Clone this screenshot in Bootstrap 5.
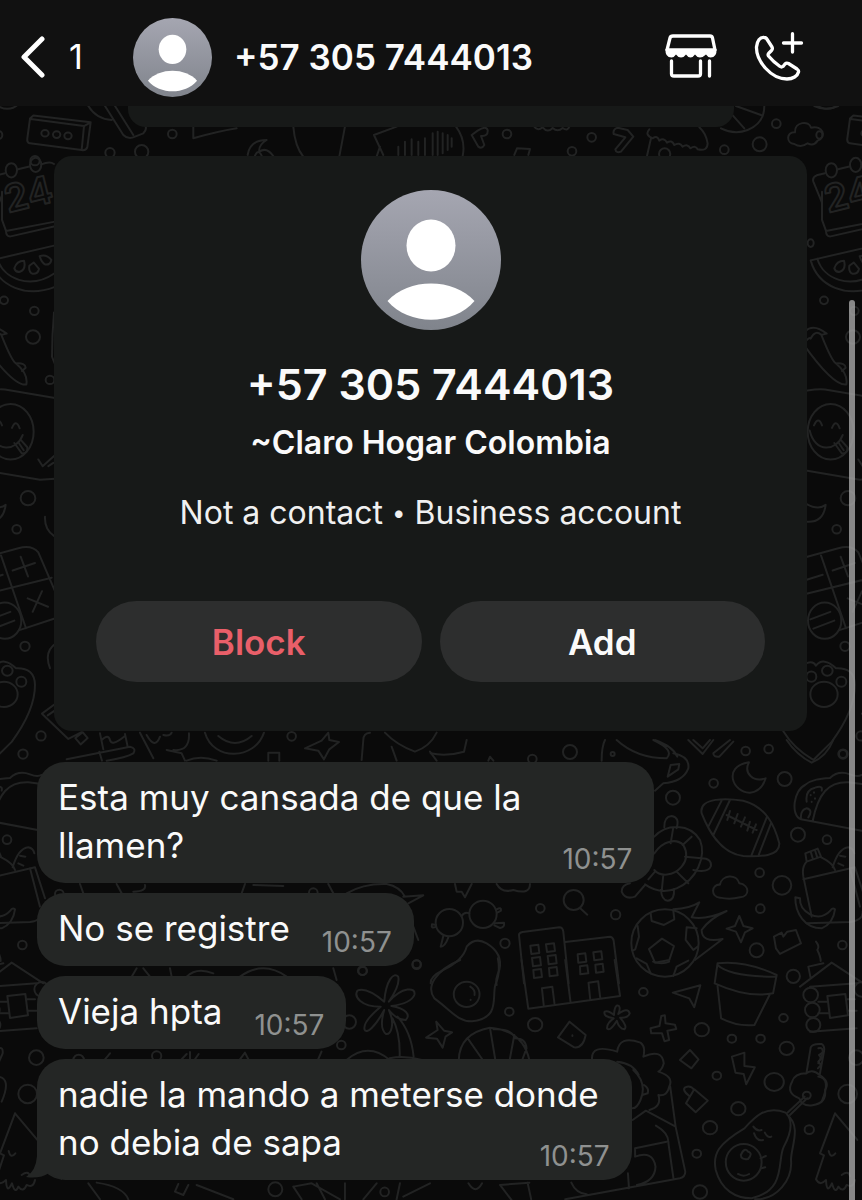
<!DOCTYPE html>
<html lang="es">
<head>
<meta charset="utf-8">
<meta name="viewport" content="width=device-width, initial-scale=1">
<title>+57 305 7444013</title>
<link href="https://cdn.jsdelivr.net/npm/bootstrap@5.3.0/dist/css/bootstrap.min.css" rel="stylesheet">
<style>
  body { background: #0a0a0a; color: #fafafa; font-family: Inter, "Liberation Sans", sans-serif; }
  .chat-page { min-height: 100vh; }
  .wallpaper { inset: 0; z-index: 0; }
  .wallpaper g { fill: none; stroke: #222323; stroke-width: 2; stroke-linecap: round; stroke-linejoin: round; }
  .wallpaper path, .wallpaper circle, .wallpaper ellipse, .wallpaper rect { vector-effect: non-scaling-stroke; }
  .chat-header { background: #111111; height: 106px; padding: 8px 58px 0 20px; z-index: 2; }
  .back-link { gap: 24px; font-size: 34px; line-height: 48px; width: 113px; }
  .header-title { font-size: 35px; font-weight: 600; line-height: 48px; margin-left: 22px; }
  .header-actions { gap: 37px; }
  .icon-btn { line-height: 0; color: #fff; }
  .chat-main { z-index: 1; padding-bottom: 20px; }
  .notice-end { height: 21px; margin: 0 128px; background: #171918; border-radius: 0 0 18px 18px; }
  .contact-card { background: #171918; border-radius: 18px; margin: 29px 55px 31px 54px; padding: 34px 42px 49px; }
  .card-phone { font-size: 43px; font-weight: 600; line-height: 56px; margin-top: 26px; }
  .card-name { font-size: 32px; font-weight: 600; line-height: 40px; margin-top: 11px; }
  .card-note { font-size: 32px; line-height: 40px; margin: 30px 0 68px; color: #f0f0f0; }
  .card-note .dot { font-size: 24px; line-height: 24px; vertical-align: 3px; }
  .pill-btn { background: #2d2e2e; color: #fafafa; border: 0; border-radius: 41px; height: 81px; font-size: 35px; font-weight: 600; line-height: 48px; }
  .pill-btn.is-danger { color: #e95f69; }
  .action-row { gap: 18px; }
  .message-list { gap: 10px; margin-left: 37px; }
  .bubble { background: #242625; border-radius: 28px; padding: 11px 33px 14px 21px; font-size: 35px; line-height: 48px; }
  .bubble.beside-time { padding-right: 124px; }
  .bubble.wide-bubble { padding-right: 133px; }
  .bubble time { right: 22px; bottom: 8px; font-size: 28px; line-height: 32px; color: #8f9190; }
  .bubble-tail { left: -11px; bottom: 0; }
  .scroll-thumb { top: 300px; bottom: 0; right: 7px; width: 6px; border-radius: 3px 3px 0 0; background: rgba(170,170,170,.78); z-index: 3; }
</style>
</head>
<body>
<div class="chat-page position-relative overflow-hidden">

  <svg class="wallpaper position-absolute w-100 h-100" viewBox="0 0 862 1200" preserveAspectRatio="xMinYMin slice" aria-hidden="true">
    <defs>
      <!-- edge column of doodles, shared by both sides of the tile -->
      <g id="edge-top" transform="translate(0 100) scale(.3333 .4209)">
        <path d="M-15 10Q25 32 55 10"/><circle cx="-2" cy="83" r="9"/>
        <path d="M90 44L100 37L272 53L262 112Q258 121 245 119L90 103Q80 101 82 91ZM92 45L252 62L245 119M252 62L272 53"/>
        <ellipse cx="135" cy="79" rx="11" ry="8"/><ellipse cx="170" cy="82" rx="11" ry="8"/><ellipse cx="204" cy="85" rx="11" ry="8"/>
        <path d="M15 174L-10 179Q-24 184 -20 194L6 244M51 165L88 158M124 153Q150 145 162 152M6 244V285L18 311L165 289M18 311Q18 325 32 324L165 300M6 218V285"/>
        <ellipse cx="34" cy="167" rx="17" ry="17"/><ellipse cx="107" cy="154" rx="17" ry="17"/>
        <path d="M-28 381L162 346M-28 381C-5 445 80 470 165 444M-8 377C10 425 90 452 165 411"/>
        <path d="M43 400Q50 382 72 382Q79 402 60 408Q47 410 43 400ZM88 394L101 386L117 401Q114 414 98 413Q85 409 88 394ZM119 371Q140 366 154 380Q151 392 136 391Q125 387 119 371Z"/>
        <circle cx="-28" cy="340" r="9"/><ellipse cx="12" cy="476" rx="12" ry="9"/><ellipse cx="103" cy="501" rx="13" ry="10"/><ellipse cx="99" cy="563" rx="21" ry="16"/><ellipse cx="150" cy="665" rx="13" ry="10"/>
        <path d="M-45 550Q-20 530 20 555L4 558Q35 620 48 626Q85 650 79 676Q40 680 -50 580Q-30 560 -28 567Q-15 545 4 558M48 626Q76 624 77 636L66 644M162 505Q156 560 156 610L164 626"/>
        <path d="M-90 700Q-20 685 15 688L165 708M-60 878L120 902L165 900"/>
        <ellipse cx="32" cy="788" rx="69" ry="66"/><path d="M-31 785C-15 840 50 835 68 796M-18 773Q-5 750 6 773M36 779Q48 757 59 780M43 815L66 840Q84 840 82 825L63 808M55 813L71 832M115 854L128 870L162 846M145 870L160 862"/>
        <ellipse cx="84" cy="946" rx="22" ry="17"/><ellipse cx="50" cy="1020" rx="13" ry="10"/><path d="M-40 960Q-5 975 17 962Q10 1005 -40 1002M135 990Q133 1020 162 1036"/>
        <path d="M-60 1090L55 1065Q95 1056 115 1075L164 1165M-50 1175L155 1135M3 1082L78 1255M56 1260L164 1232M38 1118L105 1100M62 1085L84 1132M83 1184L144 1204M98 1216L126 1167M-40 1140L8 1128"/>
        <ellipse cx="14" cy="1237" rx="50" ry="43"/><path d="M-29 1234L31 1216M-20 1256L43 1237"/>
        <ellipse cx="75" cy="1298" rx="14" ry="11"/><ellipse cx="22" cy="1356" rx="16" ry="12"/><ellipse cx="64" cy="1382" rx="15" ry="12"/><ellipse cx="12" cy="1412" rx="41" ry="30"/><ellipse cx="-26" cy="1370" rx="15" ry="12"/>
        <path d="M-40 1338Q-20 1332 -12 1344Q10 1322 48 1350Q104 1348 105 1390Q105 1450 35 1525L-20 1568Q-80 1540 -110 1500M170 1290Q130 1310 150 1350"/>
        <ellipse cx="123" cy="1511" rx="14" ry="11"/><ellipse cx="69" cy="1554" rx="14" ry="11"/><path d="M165 1435L126 1458L205 1518L245 1502M165 1450L143 1462M226 1516L248 1502L263 1516L242 1531Z"/>
      </g>
      <g id="edge-bottom" transform="translate(0 720) scale(.3333)">
        <path d="M-57 298C-90 285 -78 210 -45 195C-25 178 0 176 30 174Q55 150 90 163Q112 172 125 165M-57 298L125 332M-22 303C-5 220 25 185 85 187L125 192M-40 245Q-45 210 -15 203Q10 195 5 212M-57 298Q-60 270 -40 265Q-20 270 -35 292M-28 225v1M-18 217v1M-15 235v1M-25 245v1"/>
        <circle cx="21" cy="359" r="13"/>
        <path d="M-44 400L-7 386L3 410L-40 425ZM-28 395L-22 415M-15 391L-9 410M-40 425Q-55 440 -50 470L-25 590M4 412Q40 430 45 450M38 442Q55 385 85 382Q100 385 103 400M55 430L70 437M60 407L76 410M-50 478L105 442L135 535M90 445L120 560M-40 610L90 606Q130 600 128 575"/>
        <path d="M-74 532C-75 580 -45 625 5 625Q40 610 45 568Q37 562 31 572Q5 600 -30 583Q-62 565 -60 535Z"/>
        <circle cx="67" cy="675" r="13"/><path d="M-12 665Q0 680 -8 690Q2 710 2 723"/>
        <path d="M-60 800L35 728L130 790M-35 740L10 730M-35 740L-28 775M-30 800L110 790M-30 935L110 925M22 828L76 822L84 886L30 894ZM-5 845H22M-5 880H28M79 838H105M84 872H110"/>
        <circle cx="-28" cy="825" r="22"/><circle cx="-23" cy="870" r="22"/><circle cx="-20" cy="915" r="21"/><circle cx="125" cy="808" r="22"/>
        <circle cx="109" cy="1013" r="22"/><circle cx="83" cy="1122" r="28"/>
        <path d="M-5 985Q10 980 8 1000L-5 1030M-5 1070Q35 1075 5 1145M45 1180L112 1260M45 1180L0 1300L12 1306L-12 1378Q0 1400 18 1380Q20 1425 36 1390Q45 1425 55 1400Q70 1420 80 1395Q100 1405 105 1380M26 1293Q32 1318 46 1300M65 1365Q85 1350 90 1368"/>
      </g>
    </defs>
    <use href="#edge-top"/><use href="#edge-top" x="820"/>
    <use href="#edge-bottom"/><use href="#edge-bottom" x="820"/>
    <g font-size="38" font-weight="600" font-family="Inter, sans-serif">
      <text transform="translate(8 213) rotate(-14)">24</text>
      <text transform="translate(828 213) rotate(-14)">24</text>
    </g>

    <!-- strip above the contact card -->
    <g transform="scale(.3333)">
      <path d="M265 318Q290 358 335 360M315 318L370 405Q385 420 405 410L430 400Q445 385 432 370M345 318L400 405M580 380V415Q650 395 710 385M880 380Q885 440 910 470M1035 380L1018 470M743 465Q750 420 800 420Q775 435 778 455Q800 440 820 468M765 467Q775 445 785 467M1190 380L1122 405L1150 465M1140 440L1130 470M1195 465V440M1215 465V425M1235 465V418M1255 465V425M1275 465V415"/>
      <circle cx="517" cy="402" r="13"/><circle cx="330" cy="458" r="14"/><circle cx="425" cy="455" r="20"/><circle cx="105" cy="482" r="14"/>
    </g>
    <g transform="translate(431 0) scale(.3333)">
      <path d="M5 465V400M20 465V395M35 460V400M50 450V405M62 440V415M75 380Q105 420 95 468M122 405L140 392Q165 375 170 390Q172 410 150 408L160 435Q152 448 142 440ZM310 380Q320 395 335 382Q350 400 365 384Q380 398 395 384Q410 395 415 380M250 465L258 445L297 447L292 465M548 402Q545 388 560 383L590 390L607 410L570 455Q555 460 553 448L583 412ZM655 388Q640 405 665 415Q680 405 685 422Q700 412 708 428Q722 418 730 435Q745 425 755 440Q770 430 778 445Q795 435 800 448Q830 455 830 430Q825 400 805 382M660 415L648 468M870 385Q910 405 950 390Q1000 370 1000 318M900 340L940 385M915 318L990 345M1150 318Q1185 335 1222 318"/>
      <circle cx="228" cy="402" r="13"/><circle cx="423" cy="454" r="13"/><circle cx="482" cy="412" r="13"/><circle cx="701" cy="462" r="17"/><circle cx="880" cy="449" r="13"/><circle cx="986" cy="433" r="21"/><circle cx="1036" cy="371" r="13"/>
      <path d="M1090 432C1065 430 1065 395 1092 397C1090 365 1135 360 1140 383C1175 375 1190 410 1160 422Q1148 440 1130 430Q1110 445 1090 432Z"/>
    </g>

    <!-- left half, around the messages -->
    <g transform="translate(0 720) scale(.3333)">
      <path d="M200 118L390 80Q410 85 400 100Q380 112 320 122M298 95L306 122M300 40L310 88M375 42L383 80M305 60Q325 40 330 60T372 50M420 38L460 115M440 45Q465 90 480 50M490 45Q510 50 515 38M520 90Q570 95 567 40M500 90L545 100L555 122M615 38C640 125 765 120 792 38M655 48Q705 90 755 48M985 38L965 62L915 85L955 92L972 118L988 88L1017 66L988 60ZM1085 120L1090 60Q1090 40 1110 38M1155 38Q1190 75 1245 95Q1290 80 1310 38M1175 80L1190 122M1290 95L1310 122M805 122V98H838V122M560 122Q600 105 650 122"/>
      <circle cx="875" cy="49" r="13"/>
      <path d="M240 492L250 520M350 492L365 520M400 515Q440 515 435 495M725 520L735 492M760 495L850 498M985 492L1000 520M1040 520Q1090 490 1160 492Q1200 500 1215 530M1210 530L1270 526L1225 550M1240 620L1255 660M410 745L395 770M430 745L450 770M510 745L515 770M560 770Q590 740 640 760M720 770Q790 720 860 770M1000 745L1010 780"/>
      <circle cx="178" cy="522" r="13"/><circle cx="940" cy="518" r="13"/><circle cx="1087" cy="752" r="13"/><circle cx="1250" cy="733" r="12"/><circle cx="1048" cy="906" r="20"/><circle cx="1024" cy="975" r="13"/><circle cx="236" cy="1020" r="16"/><circle cx="470" cy="1008" r="14"/><circle cx="826" cy="1408" r="21"/><circle cx="1154" cy="1416" r="13"/>
      <path d="M545 1018L560 1002M570 1018V996M585 1018L596 1002M720 1018L735 998L745 1018M330 1000L315 1018M265 1390L300 1438M290 1388Q370 1400 385 1438M535 1392L525 1415L550 1425L565 1395M590 1395L700 1438M880 1400L905 1438M880 1400L935 1390L1020 1438M950 1390L975 1438M1035 1390V1438M1090 1438L1130 1390M1190 1438L1200 1390M1210 1430L1290 1390"/>
    </g>

    <!-- right of the first message -->
    <g transform="translate(400 740) scale(.3333)">
      <path d="M92 40Q140 50 192 35L200 0M605 62Q605 20 615 0M650 0Q710 55 800 55Q825 30 760 0M820 40Q870 50 865 85Q850 125 790 130L765 152M765 0Q820 20 832 50M812 75L838 72L835 88L803 110ZM865 0L908 42L940 0M880 0L908 25L930 0M990 0L940 40Q940 52 958 50L1000 5M1160 0Q1190 45 1235 68Q1280 50 1300 0M265 62L270 50L280 62"/>
      <circle cx="510" cy="36" r="21"/><circle cx="638" cy="42" r="6"/><circle cx="397" cy="57" r="13"/><circle cx="1037" cy="33" r="13"/><circle cx="1106" cy="27" r="13"/><circle cx="1329" cy="42" r="12"/><circle cx="941" cy="130" r="13"/><circle cx="1154" cy="117" r="21"/><circle cx="819" cy="173" r="21"/>
      <path d="M1047 67C965 80 1000 160 1050 158Q1085 155 1097 115C1060 128 1030 100 1047 67Z"/>
      <path d="M905 220C895 170 985 175 1030 182C1100 200 1125 260 1138 310C1140 350 1080 350 1030 348C960 340 925 270 905 220ZM965 182L925 260M990 180L940 285M1100 233L1055 345M1113 250L1075 348M980 225L1070 270M990 213L982 240M1013 222L1003 250M1035 232L1023 260M1050 245L1042 272M1068 253L1058 278"/>
      <path d="M763 290C800 250 870 250 900 300C920 350 890 420 830 445Q780 465 735 433M763 340C790 300 830 295 850 315Q870 350 845 380C820 410 780 410 763 390M820 262L812 310M875 290L848 315M905 355L855 350M865 430L830 395M785 455L790 405M745 418L765 395M793 262Q792 230 815 228Q840 232 830 265M905 355Q935 355 933 378Q925 400 880 390M783 450Q785 480 803 482Q825 480 822 447M735 435L705 470Q675 480 665 455Q665 435 690 430"/>
      <circle cx="1194" cy="284" r="21"/><circle cx="1079" cy="398" r="13"/><circle cx="1146" cy="436" r="28"/><circle cx="1081" cy="506" r="13"/><circle cx="421" cy="505" r="13"/><circle cx="647" cy="524" r="14"/><circle cx="315" cy="610" r="14"/><circle cx="50" cy="674" r="13"/><circle cx="1070" cy="631" r="21"/><circle cx="1180" cy="709" r="20"/>
      <path d="M960 473C930 470 935 432 960 434C965 405 1010 400 1018 430C1050 435 1050 470 1020 472Q990 480 960 473ZM290 432Q305 460 340 450Q390 465 390 432M165 432L170 455H185L195 472L215 432"/>
      <circle cx="521" cy="480" r="30"/><path d="M540 504L562 524"/>
      <circle cx="148" cy="548" r="41"/><circle cx="249" cy="523" r="41"/><path d="M185 528Q193 515 208 520M108 560Q92 568 96 553L108 555M290 508Q305 500 303 512L292 518M283 550L312 548Q315 562 300 564L283 556M130 588L122 620Q135 620 145 592"/>
      <path d="M92 730Q90 710 130 690Q190 660 200 620Q225 590 260 610Q310 640 298 690Q285 720 290 735"/>
      <path d="M372 730L357 585Q357 578 368 576L478 562Q488 562 490 575L506 730M496 606L630 590Q640 592 641 602L657 730M391 617L415 614 418 639 394 642ZM438 613L462 610 465 633 441 636ZM396 654L420 651 423 676 399 679ZM443 648L467 645 470 670 446 673ZM400 690L423 687 426 711 402 714ZM447 684L470 681 473 706 449 709ZM533 643L556 640 559 665 535 668ZM580 637L604 634 607 658 583 661ZM540 679L562 676 565 700 541 703ZM586 674L608 671 611 695 588 698Z"/>
      <circle cx="795" cy="609" r="101"/><path d="M786 596L822 618L808 660L765 668L747 627ZM752 520L755 543L792 555L823 538L820 512M713 558L717 590L706 628L698 632M890 565L860 562L857 600L880 630L893 620M710 655L740 672L752 700M820 708L830 680L865 662M820 508Q870 505 898 487L875 532Q920 540 980 513Q930 535 905 570Q905 610 968 597L885 660"/>
      <path d="M1018 528L1005 558L980 566L1008 575L1023 607L1035 577L1058 565L1030 558ZM1122 590L1145 578L1150 590L1162 575L1188 570L1203 610L1140 642L1128 625Z"/>
    </g>

    <!-- around the last messages -->
    <g transform="translate(300 960) scale(.3584 .3333)">
      <circle cx="175" cy="33" r="12"/><circle cx="584" cy="155" r="12"/><circle cx="656" cy="194" r="20"/><circle cx="958" cy="96" r="12"/><circle cx="1121" cy="209" r="20"/><circle cx="1205" cy="236" r="12"/><circle cx="1285" cy="236" r="12"/><circle cx="1358" cy="265" r="20"/><circle cx="1349" cy="174" r="12"/><circle cx="1163" cy="347" r="12"/><circle cx="1323" cy="366" r="27"/><circle cx="1223" cy="446" r="20"/><circle cx="1144" cy="503" r="20"/><circle cx="1107" cy="581" r="12"/><circle cx="1116" cy="696" r="20"/><circle cx="1421" cy="509" r="13"/>
      <path d="M235 125C240 60 262 35 274 50Q280 75 248 125C285 80 325 80 319 105Q310 130 255 138C295 145 310 165 295 180Q270 180 248 150C265 190 255 225 240 222Q220 205 235 150C210 200 185 225 180 208Q175 185 225 140C170 140 150 110 160 92Q185 80 235 125ZM258 175Q280 220 278 290M272 170Q310 215 317 290M130 300Q190 245 250 300M250 295Q290 285 340 300M50 300L60 275"/>
      <path d="M447 0C380 30 350 80 375 115C420 150 440 185 480 184C560 175 535 110 545 75Q560 40 552 -5"/><ellipse cx="465" cy="103" rx="36" ry="38"/><path d="M475 80Q490 90 487 105M476 119v1"/>
      <path d="M618 0L637 146L893 108L878 0M740 0L755 128M680 135L675 85L704 80L710 130M810 120L805 68L832 64L838 116M985 5Q1010 15 1030 5"/>
      <path d="M380 185L384 210L352 233L382 236L398 263L406 230L424 217L402 212ZM443 300Q445 220 530 203Q620 210 640 300M468 235L510 300M530 203L545 300M598 225L585 300M632 265L620 300M540 208Q590 205 600 235Q630 235 632 265"/>
      <path d="M752 185L720 232L765 262Q790 265 797 225ZM760 226v2M876 165Q878 130 890 138Q895 145 888 162Q915 140 920 160Q915 175 893 173Q915 200 905 208Q890 205 884 182Q865 215 857 206Q855 190 875 175Q845 170 850 155Q860 150 876 165ZM1008 168L1018 166 1020 190 1046 194 1050 207 1025 212 1030 240 1017 244 1010 220 980 220 978 205 1003 198ZM1040 98L1117 76L1100 142L1086 115Z"/>
      <path d="M1165 10Q1240 0 1330 45L1320 100Q1250 115 1157 70ZM1165 15Q1200 50 1325 50M1165 78L1175 175Q1220 200 1268 195L1310 105"/>
      <path d="M1088 270L1112 298L1092 325L1060 300ZM1205 290L1240 278V318L1269 322L1245 373L1238 342L1215 338ZM1100 388L1138 422L1104 457L1077 430ZM1085 407Q1065 390 1075 382Q1090 375 1100 390"/>
      <path d="M815 300Q810 250 885 275Q890 225 950 248Q965 260 958 290Q1010 265 1015 310Q1010 330 1000 335Q1045 350 1030 380Q1025 410 1000 405Q1010 440 975 450M930 330Q970 370 950 420Q940 445 928 445M885 305Q930 310 945 345M960 375Q975 385 970 400L955 405M928 480L965 452L1048 500L1075 635Q1075 650 1060 655L740 718M1033 380L1048 500M993 497Q1030 520 1028 550L1042 655M935 565L1023 545M935 565V590Q985 570 992 620Q990 665 940 675M915 640L918 685M757 668Q770 700 800 703M558 675L640 668M558 675L590 720M635 668L645 718M470 670Q490 705 508 670"/>
      <path d="M1425 262Q1430 250 1455 252Q1465 258 1462 275L1450 345M1425 262L1413 340M1462 275L1448 285L1455 295L1446 305L1454 315L1445 325M1413 340Q1430 325 1450 345Q1480 365 1465 390Q1470 430 1430 436Q1400 440 1393 415Q1355 400 1373 365Q1380 340 1413 340M1408 410L1360 458M1415 415L1367 465"/><circle cx="1414" cy="406" r="11"/>
      <path d="M1355 458C1300 435 1270 470 1240 505C1170 550 1150 580 1160 630C1175 690 1215 715 1260 715C1360 690 1330 600 1350 560Q1385 490 1355 458ZM1360 465C1400 500 1370 560 1370 600C1375 660 1330 720 1270 718"/><ellipse cx="1238" cy="607" rx="50" ry="55"/><path d="M1230 585Q1240 560 1250 575Q1265 580 1250 597Q1230 600 1230 585M1222 642Q1238 652 1253 642M1265 500Q1275 515 1288 510M1267 520Q1275 545 1292 540M1297 518Q1305 535 1315 530M1285 595L1300 588M1287 625L1298 622"/>
    </g>
  </svg>

  <header class="chat-header position-relative d-flex align-items-center">
    <a href="#" class="back-link d-flex align-items-center text-white text-decoration-none" aria-label="Back, 1 unread">
      <svg width="25" height="42" viewBox="0 0 25 42" fill="none" stroke="#fff" stroke-width="5" stroke-linecap="round" stroke-linejoin="round" aria-hidden="true"><path d="M22 3L4 21L22 39"/></svg>
      <span>1</span>
    </a>
    <svg class="flex-shrink-0" width="79" height="79" viewBox="0 0 140 140" aria-hidden="true">
      <defs><linearGradient id="avatar-fill" x2="0" y2="1"><stop stop-color="#a5a6b1"/><stop offset="1" stop-color="#80848c"/></linearGradient></defs>
      <circle cx="70" cy="70" r="70" fill="url(#avatar-fill)"/><ellipse cx="70" cy="55.500" rx="24.500" ry="26" fill="#fff"/><path d="M26.500 111C47 87.500 93 87.500 113.500 111C92 136 48 136 26.500 111Z" fill="#fff"/>
    </svg>
    <h1 class="header-title mb-0 text-nowrap">+57 305 7444013</h1>
    <div class="header-actions d-flex align-items-center ms-auto">
      <button type="button" class="icon-btn btn p-0 border-0" aria-label="Catalog">
        <svg width="52" height="50" viewBox="0 0 52 50" fill="none" stroke="#fff" stroke-width="3.300" stroke-linecap="round" stroke-linejoin="round"><path d="M8 4H45Q47 4 47.500 6L50 18H2L5 6Q5.500 4 8 4Z"/><path d="M.5 17H51.500Q52 25.500 45.500 25.500Q43 25.500 41 22.500Q38 25.500 35 25.500Q32 25.500 30 22.500Q28 25.500 25.500 25.500Q23 25.500 21 22.500Q19 25.500 16 25.500Q13 25.500 11 22.500Q9 25.500 6.500 25.500Q0 25.500 .5 17Z" fill="#fff" stroke="none"/><path d="M6.500 29V42Q6.500 44 9 44H33Q35.500 44 35.500 42V29M44.500 29V44"/></svg>
      </button>
      <button type="button" class="icon-btn btn p-0 border-0" aria-label="Call">
        <svg width="50" height="50" viewBox="0 0 50 50" fill="none" stroke="#fff" stroke-width="3.300" stroke-linecap="round" stroke-linejoin="round"><path d="M10 5.500C6 5 3 9 2.500 15C2 29 17 47 33 47C39 47 43.500 44 44.500 40Q45 38.500 43 37L34.500 31.500Q32.500 30.500 31 32L29 34.500Q27.500 35.500 26 34.500Q19 29.500 14.500 24Q13.500 22.500 15 21L17.500 18.500Q19 17 18 15L12.500 6.500Q11.500 5.500 10 5.500Z"/><path d="M38.500 1.700V20M29.500 11H47.500"/></svg>
      </button>
    </div>
  </header>

  <main class="chat-main position-relative">
    <div class="notice-end"></div>

    <section class="contact-card text-center">
      <svg class="d-block mx-auto" width="140" height="140" viewBox="0 0 140 140" aria-hidden="true">
        <circle cx="70" cy="70" r="70" fill="url(#avatar-fill)"/><ellipse cx="70" cy="55.500" rx="24.500" ry="26" fill="#fff"/><path d="M26.500 111C47 87.500 93 87.500 113.500 111C92 136 48 136 26.500 111Z" fill="#fff"/>
      </svg>
      <h2 class="card-phone mb-0">+57 305 7444013</h2>
      <p class="card-name mb-0">~Claro Hogar Colombia</p>
      <p class="card-note">Not a contact <span class="dot">•</span> Business account</p>
      <div class="action-row d-flex">
        <button type="button" class="pill-btn is-danger btn flex-fill w-50">Block</button>
        <button type="button" class="pill-btn btn flex-fill w-50">Add</button>
      </div>
    </section>

    <section class="message-list d-flex flex-column align-items-start" aria-label="Messages">
      <div class="bubble wide-bubble position-relative">Esta muy cansada de que la<br>llamen?<time class="position-absolute">10:57</time></div>
      <div class="bubble beside-time position-relative">No se registre<time class="position-absolute">10:57</time></div>
      <div class="bubble beside-time position-relative">Vieja hpta<time class="position-absolute">10:57</time></div>
      <div class="bubble position-relative">
        <svg class="bubble-tail position-absolute" width="36" height="34" viewBox="0 0 36 34" fill="#242625" aria-hidden="true"><path d="M11 0V10Q10 25 0 31Q14 33 23 27L36 34V0Z"/></svg>
        <span class="position-relative">nadie la mando a meterse donde<br>no debia de sapa</span><time class="position-absolute">10:57</time>
      </div>
    </section>
  </main>

  <div class="scroll-thumb position-absolute" aria-hidden="true"></div>
</div>
</body>
</html>
